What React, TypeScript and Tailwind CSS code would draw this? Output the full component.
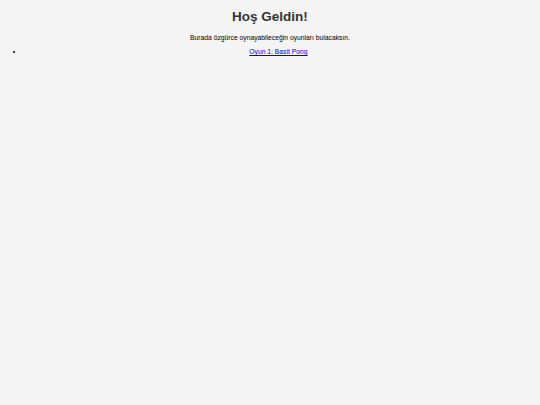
export default function App() {
  return (
    <div className="min-h-screen bg-[#f4f4f4] px-[3.375px] py-[0.1px] text-center font-['Liberation_Sans',Arial,sans-serif] text-black">
      <h1 className="my-[9.05px] text-[13.5px] leading-[1.15] font-bold text-[#333]">Hoş Geldin!</h1>
      <p className="my-[6.75px] text-[6.75px] leading-[1.15]">
        Burada özgürce oynayabileceğin oyunları bulacaksın.
      </p>
      <ul className="my-[6.75px] list-none text-[6.75px] leading-[1.15]">
        <li className="flex items-center">
          {/* bullet */}
          <span className="flex w-[16.875px] shrink-0 justify-start pl-[9.5px]">
            <span className="h-[2.4px] w-[2.4px] rounded-full bg-black" />
          </span>
          <span className="flex-1">
            <a href="#" className="text-[#0000ee] underline">
              Oyun 1: Basit Pong
            </a>
          </span>
        </li>
      </ul>
    </div>
  );
}
